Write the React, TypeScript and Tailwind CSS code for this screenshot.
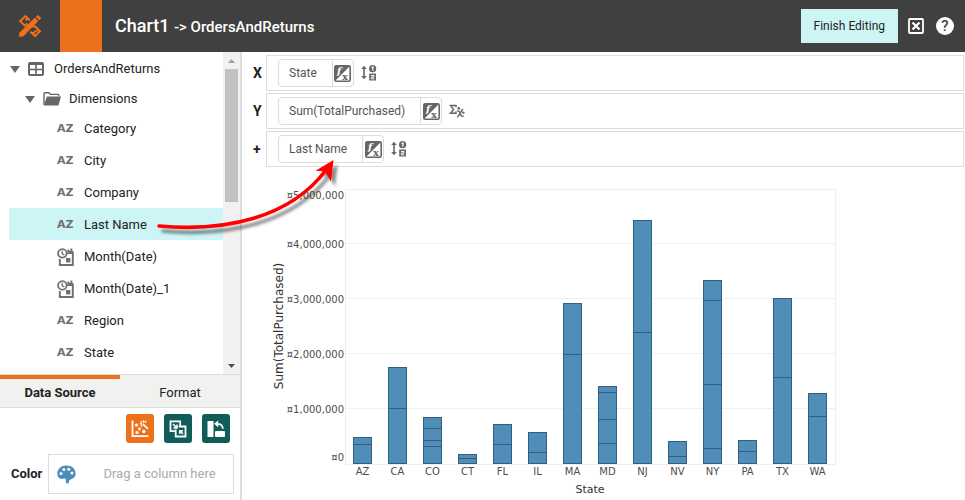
import type { ReactNode } from "react";

type BarDatum = { state: string; top: number; splits: number[] };

const BASE = 463.5;

const bars: BarDatum[] = [
  { state: "AZ", top: 437.5, splits: [444.5] },
  { state: "CA", top: 367.5, splits: [408.5] },
  { state: "CO", top: 417.5, splits: [428.5, 440.5, 446.5] },
  { state: "CT", top: 454.5, splits: [458.5] },
  { state: "FL", top: 424.5, splits: [444.5] },
  { state: "IL", top: 432.5, splits: [452.5] },
  { state: "MA", top: 303.5, splits: [354.5] },
  { state: "MD", top: 386.5, splits: [392.5, 419.5, 443.5] },
  { state: "NJ", top: 220.5, splits: [332.5] },
  { state: "NV", top: 441.5, splits: [456.5] },
  { state: "NY", top: 280.5, splits: [300.5, 384.5, 448.5] },
  { state: "PA", top: 440.5, splits: [451.5] },
  { state: "TX", top: 298.5, splits: [377.5] },
  { state: "WA", top: 393.5, splits: [416.5] },
];

const ticks = [
  { label: "¤5,000,000", y: 199 },
  { label: "¤4,000,000", y: 248 },
  { label: "¤3,000,000", y: 303 },
  { label: "¤2,000,000", y: 358 },
  { label: "¤1,000,000", y: 413 },
  { label: "¤0", y: 461 },
];

function LogoIcon() {
  return (
    <svg width="24" height="24" viewBox="0 0 24 24" fill="none" aria-hidden="true">
      <path d="M9.5 9.5 6.8 11.6 2.2 7.2 7.4 2.1 9.6 4.2 7.4 6.2M9.6 4.2 12 6.6" stroke="#ed711c" strokeWidth="2" />
      <path d="M14.5 12.5 17.3 12.6 22 17.2 17 22.2 12.4 17.8M17.4 22 15 19.6 17.2 17.4M20 15.3 17.6 17.4" stroke="#ed711c" strokeWidth="2" />
      <path d="M17 3.6 20.4 7.1 5.4 22.2 1 23 1.4 18.8Z" fill="#ed711c" />
      <path d="M17.9 2.7 20 1 23.2 4 21.3 6.2Z" fill="#ed711c" />
    </svg>
  );
}

function CloseBoxIcon() {
  return (
    <svg width="16" height="16" viewBox="0 0 16 16" fill="none" stroke="#fff" aria-hidden="true">
      <rect x="1" y="1" width="14" height="14" rx="1" strokeWidth="1.8" />
      <path d="M4.5 4.5l7 7M11.5 4.5l-7 7" strokeWidth="2.2" />
    </svg>
  );
}

function CaretIcon() {
  return (
    <svg width="10" height="7" viewBox="0 0 10 7" aria-hidden="true">
      <path d="M0 0h10L5 7z" fill="#666" />
    </svg>
  );
}

function TableIcon() {
  return (
    <svg width="16" height="14" viewBox="0 0 16 14" fill="none" stroke="#666" aria-hidden="true">
      <rect x="1" y="1" width="14" height="12" rx="1" strokeWidth="2" />
      <path d="M1 1.5h14" strokeWidth="3" />
      <path d="M8 2v11M1 7.5h14" strokeWidth="1.6" />
    </svg>
  );
}

function FolderIcon() {
  return (
    <svg width="18" height="14" viewBox="0 0 18 14" aria-hidden="true">
      <path d="M1 13V1.6Q1 .8 1.8.8H6L7.5 2.4H15Q15.8 2.4 15.8 3.2V4.2" fill="none" stroke="#666" strokeWidth="1.4" />
      <path d="M3.8 4.6H18L15.4 13.6H1z" fill="#666" />
    </svg>
  );
}

function DateIcon() {
  return (
    <svg width="18" height="18" viewBox="0 0 18 18" fill="none" stroke="#707070" aria-hidden="true">
      <circle cx="5.4" cy="5.4" r="4.3" strokeWidth="1.8" />
      <path d="M5.2 2.8v3l2.2 1" strokeWidth="1.3" />
      <path d="M2.8 11v6h13V4.2" strokeWidth="1.9" />
      <path d="M10.4 4.4h6" strokeWidth="3.2" />
      <path d="M14.4 .6v4M11.4 1.6v2" strokeWidth="1.8" />
      <rect x="9" y="10" width="4.4" height="4.4" fill="#707070" stroke="none" />
    </svg>
  );
}

function FxIcon() {
  return (
    <svg width="17" height="17" viewBox="0 0 17 17" aria-hidden="true">
      <rect x=".8" y=".8" width="15.4" height="15.4" rx="1.4" fill="#fff" stroke="#666" strokeWidth="1.6" />
      <path d="M1 1H16L1 16z" fill="#666" />
      <text x="3" y="9" fill="#fff" className="font-['DejaVu_Serif',serif] text-[10px] font-bold italic">f</text>
      <text x="8" y="15" fill="#666" className="font-['DejaVu_Serif',serif] text-[10px] font-bold">x</text>
    </svg>
  );
}

function SortIcon() {
  return (
    <svg width="16" height="16" viewBox="0 0 16 16" aria-hidden="true">
      <path d="M3 2v11" stroke="#666" strokeWidth="1.6" />
      <path d="M.2 4 3 .8 5.800 4zM.2 11 3 14.200 5.800 11z" fill="#666" />
      <circle cx="11.6" cy="3.7" r="3.600" fill="#666" />
      <rect x="8.2" y="8.6" width="6.8" height="7" rx=".6" fill="#666" />
      <path d="M10.600 2.600 11.900 1.900v3.800" fill="none" stroke="#fff" strokeWidth="1.200" />
      <path d="M10.100 10.500h2.800v1.600h-2.500v1.700h2.900" fill="none" stroke="#fff" strokeWidth="1" />
    </svg>
  );
}

function AggregateIcon() {
  return (
    <svg width="16" height="16" viewBox="0 0 16 16" fill="none" stroke="#666" aria-hidden="true">
      <path d="M7 4.200V2.500H1.500L4.600 6.400 1.500 10.300H7V8.600" strokeWidth="1.500" />
      <path d="M13.800 6 8.400 14.400M8 8.200c2-.6 2.600.2 3.200 2.200s1.200 3.400 3.400 2.600" strokeWidth="1.400" />
      <circle cx="9.800" cy="5.400" r="1.300" fill="#666" stroke="none" />
      <circle cx="14.400" cy="9.600" r="1.200" fill="#666" stroke="none" />
    </svg>
  );
}

function ChartWizardIcon() {
  return (
    <svg width="18" height="18" viewBox="0 0 18 18" fill="none" stroke="#fff" aria-hidden="true">
      <path d="M1.500.5v15.700H17.500" strokeWidth="1.800" />
      <g fill="#fff" stroke="none">
        <circle cx="5.500" cy="5" r="1.600" />
        <circle cx="6" cy="12.500" r="1.600" />
        <circle cx="8.500" cy="9" r="1.400" />
        <circle cx="12.800" cy="11.500" r="1.700" />
      </g>
      <path d="M11.800 3.800l5 5" strokeWidth="1.800" />
      <path d="M8.800 3.800h2M12.500.6v2M9.800 1.200l1.200 1.200M15.200 1.200l-1.400 1.400M9.800 6.400l1.200-1.200" strokeWidth="1.400" />
    </svg>
  );
}

function SwapIcon() {
  return (
    <svg width="18" height="18" viewBox="0 0 18 18" fill="none" stroke="#fff" aria-hidden="true">
      <path d="M6.500 11.200H1.500V1.300H11.200V6.500" strokeWidth="1.800" />
      <path d="M11.200 6.500h5.300v10H6.700V11.200" strokeWidth="1.800" />
      <path d="M6.700 11.200V9.600M11.200 6.500H9.600" strokeWidth="1.800" />
      <path d="M4 4l3.600 3.600M8 4.400v3.600H4.400" strokeWidth="1.500" />
      <path d="M14 14l-3.200-3.200M10.700 14v-3.300H14" strokeWidth="1.500" />
    </svg>
  );
}

function SwitchAxisIcon() {
  return (
    <svg width="18" height="18" viewBox="0 0 18 18" aria-hidden="true">
      <rect x=".5" y="1" width="6" height="16" rx=".5" fill="#fff" />
      <rect x="8" y="11" width="10" height="6" rx="1" fill="#fff" />
      <path d="M10 3.800c3.500 0 5.800 1.500 5.800 5" fill="none" stroke="#fff" strokeWidth="1.700" />
      <path d="M7 3.800 11.200.4v6.800z" fill="#fff" />
    </svg>
  );
}

function PaletteIcon() {
  return (
    <svg width="19" height="19" viewBox="0 0 19 19" aria-hidden="true">
      <path
        d="M9.500.5C4.300.5.3 4 .3 8.600c0 3.600 2 5.400 4.400 5.400 1.500 0 2-.6 3.200-.4 1.500.3.500 2.300 1.100 3.800.5 1.200 1.800 1.500 2.500.8.600-.6.300-2.200 1.200-3.100 1.200-1.200 5.900-1.400 5.900-6.600C18.600 4 14.700.5 9.500.5Z"
        fill="#4f8bb8"
      />
      <g fill="#fff">
        <circle cx="4" cy="8.500" r="1.500" />
        <circle cx="6.800" cy="4.500" r="1.500" />
        <circle cx="11.800" cy="4.300" r="1.500" />
        <circle cx="15" cy="8" r="1.500" />
      </g>
    </svg>
  );
}

const dimensions = ["Category", "City", "Company", "Last Name", "Month(Date)", "Month(Date)_1", "Region", "State"];

function Dimension({ name }: { name: string }) {
  const selected = name === "Last Name";
  return (
    <li className={selected ? "bg-[#cdf5f5]" : ""}>
      <button type="button" className="flex h-8 w-full items-center pt-[2px] pl-12 text-left">
        <span className="flex w-[27px] items-center text-[#707070]">
          {name.startsWith("Month") ? (
            <DateIcon />
          ) : (
            <span className="font-['DejaVu_Sans',sans-serif] text-[11px] font-bold">AZ</span>
          )}
        </span>
        {name}
      </button>
    </li>
  );
}

function Shelf({ axis, field, children }: { axis: string; field: string; children: ReactNode }) {
  return (
    <div className="flex h-9 items-center">
      <span className="w-6 shrink-0 pl-[11px] text-sm font-bold text-[#222]">{axis}</span>
      <div className="flex h-9 flex-1 items-center border border-[#ddd] pl-[11px]">
        <div className="flex h-7 rounded-[4px] border border-[#ddd]">
          <button type="button" className="pr-[15px] pl-[10px] text-xs text-[#555]">{field}</button>
          <button type="button" aria-label={`Edit ${field}`} className="flex w-[21px] items-center justify-center border-l border-[#ddd]">
            <FxIcon />
          </button>
        </div>
        <button type="button" aria-label={`Options for ${field}`} className="ml-[7px]">
          {children}
        </button>
      </div>
    </div>
  );
}

function Chart() {
  return (
    <svg
      width="584"
      height="326"
      viewBox="266 174 584 326"
      className="ml-6 block font-['DejaVu_Sans',sans-serif]"
      role="img"
      aria-label="Sum of total purchased by state"
    >
      <rect x="345.5" y="189.5" width="490" height="275" fill="none" stroke="#eee" />
      <path d="M346 243.5h490M346 298.5h490M346 353.5h490M346 408.5h490" stroke="#f0f0f0" />
      {ticks.map((t) => (
        <text key={t.label} x="344" y={t.y} textAnchor="end" fill="#4d4d4d" className="text-[10px]">{t.label}</text>
      ))}
      {bars.map((b, i) => {
        const x = 353.5 + 35 * i;
        return (
          <g key={b.state}>
            <rect x={x} y={b.top} width="18" height={BASE - b.top} fill="#518db9" stroke="#325f80" />
            {b.splits.map((s) => (
              <path key={s} d={`M${x} ${s}h18`} stroke="#325f80" />
            ))}
            <text x={x + 9} y="475" textAnchor="middle" fill="#4d4d4d" className="text-[10px]">{b.state}</text>
          </g>
        );
      })}
      <text x="590" y="493" textAnchor="middle" fill="#333" className="text-[11px]">State</text>
      <text transform="translate(283 326) rotate(-90)" textAnchor="middle" fill="#333" className="text-xs">
        Sum(TotalPurchased)
      </text>
    </svg>
  );
}

function DragArrow() {
  return (
    <svg
      width="200"
      height="100"
      viewBox="150 150 200 100"
      className="pointer-events-none absolute top-[150px] left-[150px]"
      aria-hidden="true"
    >
      <defs>
        <filter id="arrowShadow" x="-10%" y="-20%" width="125%" height="150%">
          <feDropShadow dx="4" dy="5" stdDeviation="1.5" floodColor="#000" floodOpacity="0.45" />
        </filter>
      </defs>
      <g filter="url(#arrowShadow)">
        <path d="M159 226C225 232 290 218 326 170" fill="none" stroke="#f00" strokeWidth="3.600" strokeLinecap="round" />
        <path d="M333.500 160 315.500 170.800 325 171.500 331 181.500Z" fill="#f00" />
      </g>
    </svg>
  );
}

const toolButton = "flex h-[29px] w-7 items-center justify-center rounded-[3px]";

export default function App() {
  return (
    <div className="relative flex h-screen flex-col overflow-hidden bg-white font-[Roboto,sans-serif] text-[13px] text-[#222]">
      <header className="flex h-[52px] shrink-0 items-center bg-[#404040] text-white">
        <div className="flex w-[60px] justify-center">
          <LogoIcon />
        </div>
        <div className="h-full w-[42px] bg-[#ed711c]" />
        <h1 className="flex-1 pl-[13px] text-lg font-medium">
          Chart1 <span className="text-[15px]">-&gt; OrdersAndReturns</span>
        </h1>
        <button type="button" className="h-[34px] bg-[#cdf5f5] px-[13px] text-xs text-[#222]">Finish Editing</button>
        <button type="button" aria-label="Close" className="ml-[10px]">
          <CloseBoxIcon />
        </button>
        <button
          type="button"
          aria-label="Help"
          className="mr-[11px] ml-3 flex size-[18px] items-center justify-center rounded-full bg-white text-[15px] font-medium text-[#404040]"
        >
          ?
        </button>
      </header>

      <div className="flex min-h-0 flex-1">
        <aside className="flex w-[242px] shrink-0 flex-col border-r-2 border-[#ddd]">
          <div className="flex min-h-0 flex-1">
            <div className="min-w-0 flex-1 overflow-hidden">
              <button type="button" className="flex h-8 w-full items-center pt-[2px] pl-[10px]">
                <CaretIcon />
                <span className="mr-[10px] ml-2">
                  <TableIcon />
                </span>
                OrdersAndReturns
              </button>
              <button type="button" className="flex h-7 w-full items-center pt-[2px] pl-[25px]">
                <CaretIcon />
                <span className="mr-2 ml-2">
                  <FolderIcon />
                </span>
                Dimensions
              </button>
              <ul className="pl-[9px]">
                {dimensions.map((name) => (
                  <Dimension key={name} name={name} />
                ))}
              </ul>
            </div>
            <div className="flex w-[17px] flex-col items-center bg-[#f1f1f1]">
              <span className="flex h-[17px] items-center">
                <svg width="7" height="4" viewBox="0 0 7 4" aria-hidden="true">
                  <path d="M0 4 3.500 0 7 4z" fill="#a3a3a3" />
                </svg>
              </span>
              <span className="h-[133px] w-[13px] bg-[#c1c1c1]" />
              <span className="mt-auto flex h-[17px] items-center">
                <svg width="7" height="4" viewBox="0 0 7 4" aria-hidden="true">
                  <path d="M0 0h7L3.500 4z" fill="#505050" />
                </svg>
              </span>
            </div>
          </div>

          <div className="flex h-[34px] shrink-0 border-y border-[#ddd] bg-[#f1f1ef]" role="tablist">
            <button type="button" role="tab" aria-selected="true" className="flex-1 border-t-4 border-[#ed711c] font-bold">
              Data Source
            </button>
            <button type="button" role="tab" aria-selected="false" className="flex-1 border-t-4 border-transparent">
              Format
            </button>
          </div>

          <div className="h-[92px] shrink-0 pt-[6px]">
            <div className="flex justify-end gap-[10px] pr-[10px]">
              <button type="button" aria-label="Chart wizard" className={`${toolButton} bg-[#ed711c]`}>
                <ChartWizardIcon />
              </button>
              <button type="button" aria-label="Convert" className={`${toolButton} bg-[#0f5c58]`}>
                <SwapIcon />
              </button>
              <button type="button" aria-label="Switch axes" className={`${toolButton} bg-[#0f5c58]`}>
                <SwitchAxisIcon />
              </button>
            </div>
            <div className="mt-[11px] flex items-center pr-[6px]">
              <span className="w-12 pl-[11px] font-bold">Color</span>
              <div className="flex h-10 flex-1 items-center border border-[#ddd] pl-2">
                <PaletteIcon />
                <span className="flex-1 pl-[10px] text-center text-[#aaa]">Drag a column here</span>
              </div>
            </div>
          </div>
        </aside>

        <main className="min-w-0 flex-1">
          <div className="flex flex-col gap-[2px] pt-[3px] pr-px">
            <Shelf axis="X" field="State">
              <SortIcon />
            </Shelf>
            <Shelf axis="Y" field="Sum(TotalPurchased)">
              <AggregateIcon />
            </Shelf>
            <Shelf axis="+" field="Last Name">
              <SortIcon />
            </Shelf>
          </div>
          <div className="pt-[7px]">
            <Chart />
          </div>
        </main>
      </div>
      <DragArrow />
    </div>
  );
}
